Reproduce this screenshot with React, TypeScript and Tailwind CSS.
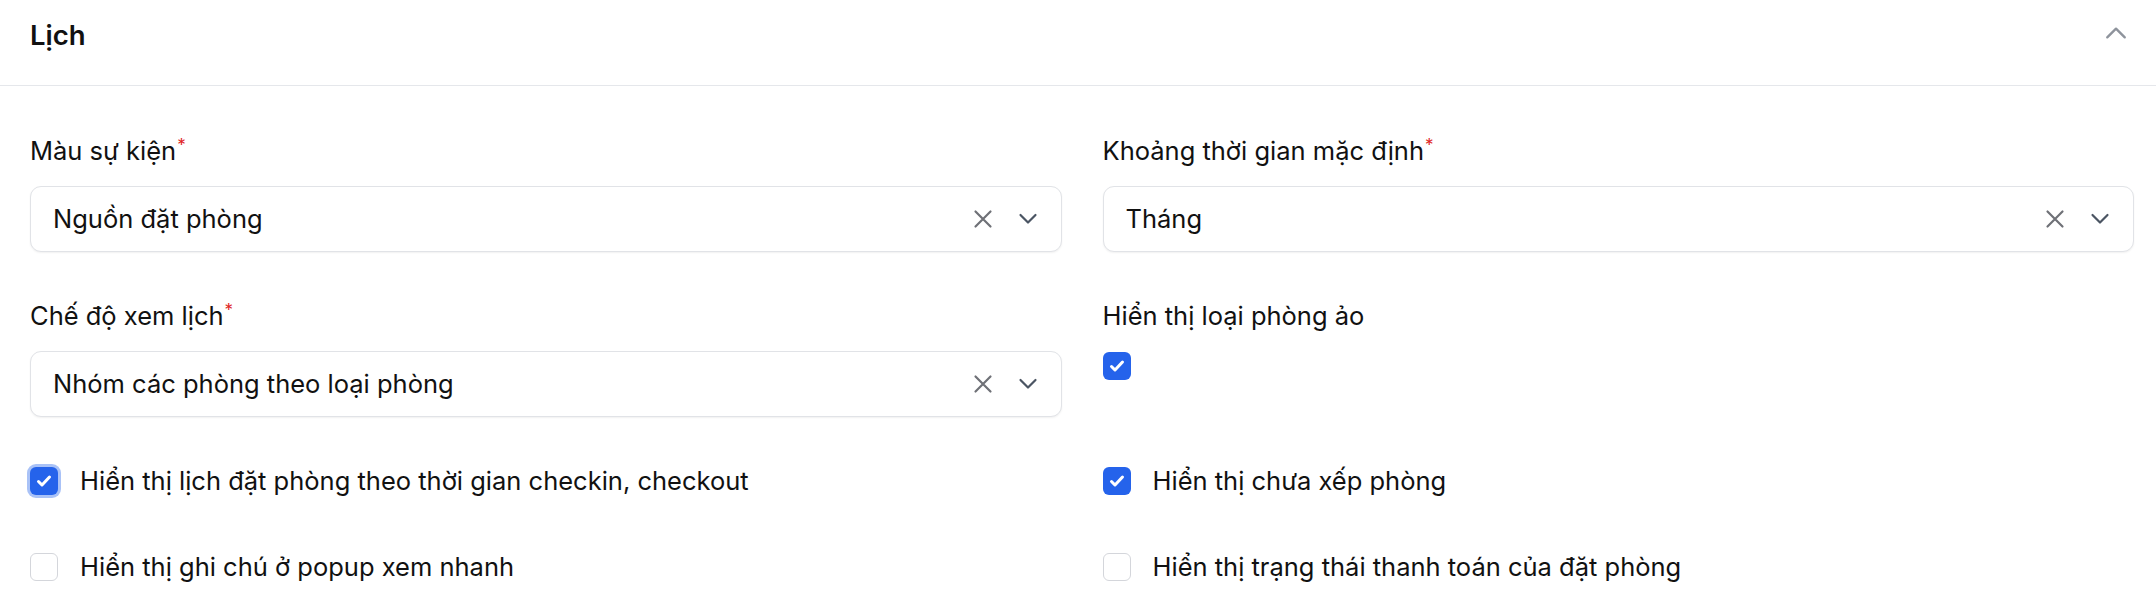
import React from 'react';

const XIcon = () => (
  <svg width="20" height="20" viewBox="0 0 20 20" fill="none" stroke="#6f7177" strokeWidth="2.2" strokeLinecap="round">
    <path d="M2.5 2.5l15 15M17.5 2.5l-15 15" />
  </svg>
);

const ChevronDown = () => (
  <svg width="20" height="20" viewBox="0 0 20 20" fill="none" stroke="#4b5563" strokeWidth="2.2" strokeLinecap="round" strokeLinejoin="round">
    <path d="M2.5 6l7.5 7.5L17.5 6" />
  </svg>
);

const ChevronUp = () => (
  <svg width="28" height="28" viewBox="0 0 24 24" fill="none" stroke="#8e939c" strokeWidth="2" strokeLinecap="round" strokeLinejoin="round">
    <path d="M4.5 15.75l7.5-7.5 7.5 7.5" />
  </svg>
);

const CheckMark = () => (
  <svg width="20" height="20" viewBox="0 0 20 20" fill="none" stroke="#ffffff" strokeWidth="3" strokeLinecap="round" strokeLinejoin="round">
    <path d="M4.5 10.5l3.5 3.5 7.5-8" />
  </svg>
);

const Label = ({ text, required }: { text: string; required?: boolean }) => (
  <div className="h-[33px] text-[25.5px] leading-[33px] text-[#111111]">
    {text}
    {required && <span className="relative -top-[9px] ml-[1px] text-[17px] leading-[0] text-[#e02424]">*</span>}
  </div>
);

const SelectBox = ({ value }: { value: string }) => (
  <div className="mt-[19px] flex h-[66px] items-center justify-between rounded-[11px] border border-[#e1e3e7] bg-white pl-[22px] pr-[23px] shadow-[0_1px_2px_rgba(0,0,0,0.06)]">
    <span className="text-[25.5px] text-[#111111]">{value}</span>
    <div className="flex items-center gap-[25px]">
      <XIcon />
      <ChevronDown />
    </div>
  </div>
);

const Checkbox = ({ checked, focused }: { checked?: boolean; focused?: boolean }) => (
  <div
    className={`flex h-[28px] w-[28px] shrink-0 items-center justify-center rounded-[6px] ${
      checked ? 'bg-[#2563eb]' : 'border border-[#d4d6db] bg-white'
    } ${focused ? 'ring-[3px] ring-[#a9c2f7]' : ''}`}
  >
    {checked && <CheckMark />}
  </div>
);

const CheckRow = ({ text, checked, focused }: { text: string; checked?: boolean; focused?: boolean }) => (
  <div className="flex h-[33px] items-center gap-[22px]">
    <Checkbox checked={checked} focused={focused} />
    <span className="text-[25.5px] leading-[33px] text-[#111111]">{text}</span>
  </div>
);

export default function App() {
  return (
    <div className="h-[616px] w-[2156px] overflow-hidden bg-white font-['Inter',sans-serif]">
      <div className="flex h-[86px] items-start justify-between border-b border-[#e5e7eb] pl-[30px] pr-[26px] pt-[16px]">
        <h2 className="text-[27.5px] font-semibold leading-[38px] text-[#111111]">Lịch</h2>
        <div className="mt-[3px]">
          <ChevronUp />
        </div>
      </div>

      <div className="pl-[30px] pr-[22px] pt-[48px]">
        <div className="grid grid-cols-2 gap-x-[41px] gap-y-[47px]">
          <div>
            <Label text="Màu sự kiện" required />
            <SelectBox value="Nguồn đặt phòng" />
          </div>
          <div>
            <Label text="Khoảng thời gian mặc định" required />
            <SelectBox value="Tháng" />
          </div>
          <div>
            <Label text="Chế độ xem lịch" required />
            <SelectBox value="Nhóm các phòng theo loại phòng" />
          </div>
          <div>
            <Label text="Hiển thị loại phòng ảo" />
            <div className="mt-[20px]">
              <Checkbox checked />
            </div>
          </div>
        </div>

        <div className="mt-[47px] grid grid-cols-2 gap-x-[41px] gap-y-[53px]">
          <CheckRow text="Hiển thị lịch đặt phòng theo thời gian checkin, checkout" checked focused />
          <CheckRow text="Hiển thị chưa xếp phòng" checked />
          <CheckRow text="Hiển thị ghi chú ở popup xem nhanh" />
          <CheckRow text="Hiển thị trạng thái thanh toán của đặt phòng" />
        </div>
      </div>
    </div>
  );
}
